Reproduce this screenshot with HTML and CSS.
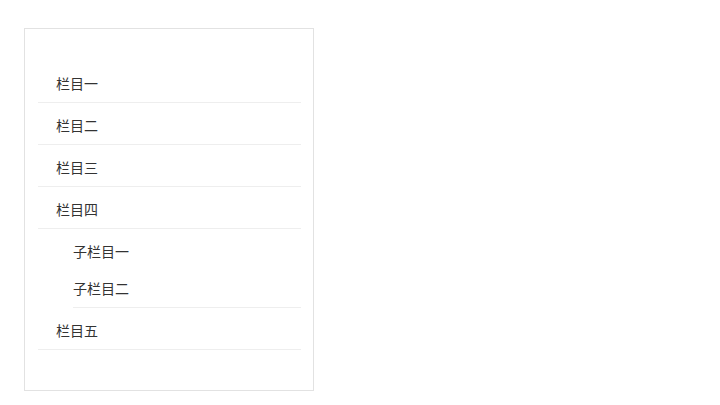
FILE: index.html
```html
<!DOCTYPE html>
<html lang="zh">
<head>
<meta charset="utf-8">
<link rel="stylesheet" href="styles.css">
</head>
<body>
<div class="panel">
  <ul class="menu">
    <li class="item"><span class="label">栏目一</span></li>
    <li class="item"><span class="label">栏目二</span></li>
    <li class="item"><span class="label">栏目三</span></li>
    <li class="item"><span class="label">栏目四</span></li>
    <li class="sub">
      <ul class="submenu">
        <li class="subitem">子栏目一</li>
        <li class="subitem">子栏目二</li>
      </ul>
    </li>
    <li class="item"><span class="label">栏目五</span></li>
  </ul>
</div>
</body>
</html>
```
FILE: styles.css
```css
html, body {
  margin: 0;
  padding: 0;
  background: #fff;
}
body {
  padding: 28px 24px;
  font-family: "Noto Sans CJK SC", "Microsoft YaHei", sans-serif;
  font-size: 14px;
  color: #333;
}
.panel {
  width: 263px;
  padding: 32px 12px 40px 13px;
  border: 1px solid #e2e2e2;
}
.menu, .submenu {
  list-style: none;
  margin: 0;
  padding: 0;
}
.item {
  box-sizing: border-box;
  height: 42px;
  display: flex;
  align-items: center;
  padding-left: 18px;
  padding-top: 2px;
  border-bottom: 1px solid #eeeeee;
}
.sub {
  padding-left: 35px;
}
.submenu {
  padding-top: 3px;
  padding-bottom: 1px;
  border-bottom: 1px solid #eeeeee;
}
.subitem {
  height: 37px;
  display: flex;
  align-items: center;
}
```
